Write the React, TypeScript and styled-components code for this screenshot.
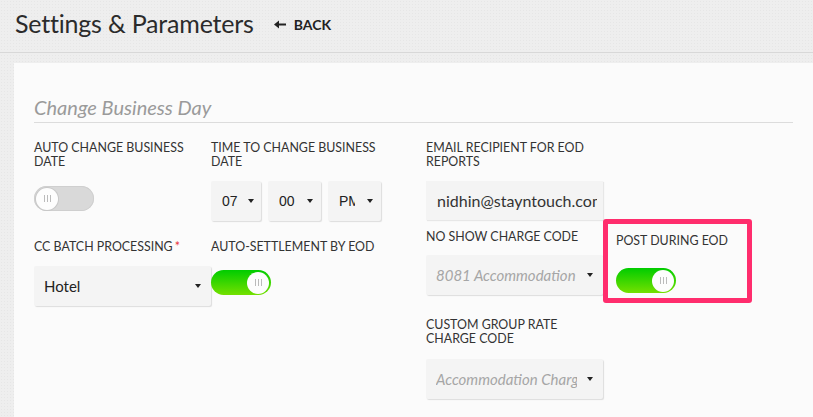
import { FC } from "react";
import styled, { createGlobalStyle, css } from "styled-components";

const GlobalStyle = createGlobalStyle`
  html, body {
    margin: 0;
    padding: 0;
  }
  body {
    font-family: "Lato", "Open Sans", sans-serif;
    background-color: #eeeeee;
    background-image: radial-gradient(rgba(0, 0, 0, 0.035) 1px, transparent 1px);
    background-size: 3px 3px;
    color: #333;
  }
`;

interface ToggleProps {
  on?: boolean;
}

const Toggle: FC<ToggleProps> = ({ on }) => (
  <Track $on={on}>
    <Knob $on={on}>
      <Grip />
    </Knob>
  </Track>
);

interface SelectProps {
  value: string;
  disabled?: boolean;
  width: number;
}

const Select: FC<SelectProps> = ({ value, disabled, width }) => (
  <SelectBox style={{ width }}>
    <SelectValue $disabled={disabled}>{value}</SelectValue>
    <Caret />
  </SelectBox>
);

const TimeSelect: FC<{ value: string; width: number }> = ({ value, width }) => (
  <TimeBox style={{ width }}>
    <TimeValue>{value}</TimeValue>
    <Caret />
  </TimeBox>
);

export default function App() {
  return (
    <>
      <GlobalStyle />
      <Page>
        <Header>
          <Title>Settings &amp; Parameters</Title>
          <Back>
            <BackArrow>
              <svg width="12" height="9" viewBox="0 0 12 9">
                <path d="M0 4.5 L5 0.5 V3.4 H12 V5.6 H5 V8.5 Z" fill="#222" />
              </svg>
            </BackArrow>
            BACK
          </Back>
        </Header>
        <Content>
          <Panel>
            <SectionTitle>Change Business Day</SectionTitle>
            <Form>
              <LeftGrid>
                <Field>
                  <Label>
                    Auto change business
                    <br />
                    date
                  </Label>
                  <ToggleWrap>
                    <Toggle />
                  </ToggleWrap>
                </Field>
                <Field>
                  <Label>
                    Time to change business
                    <br />
                    date
                  </Label>
                  <TimeRow>
                    <TimeSelect value="07" width={50} />
                    <TimeSelect value="00" width={53} />
                    <TimeSelect value="PM" width={53} />
                  </TimeRow>
                </Field>
                <Field>
                  <Label>
                    CC Batch processing<Required>*</Required>
                  </Label>
                  <Select value="Hotel" width={177} />
                </Field>
                <Field>
                  <Label>Auto-settlement by EOD</Label>
                  <ToggleWrap $top={4}>
                    <Toggle on />
                  </ToggleWrap>
                </Field>
              </LeftGrid>
              <RightGrid>
                <Field>
                  <Label>
                    Email recipient for EOD
                    <br />
                    reports
                  </Label>
                  <Input>
                    <InputText>nidhin@stayntouch.com</InputText>
                  </Input>
                </Field>
                <Spacer />
                <Field $top={10} $gap={11}>
                  <Label>No show charge code</Label>
                  <Select value="8081 Accommodation" width={177} disabled />
                </Field>
                <Highlight>
                  <Label>Post during EOD</Label>
                  <ToggleWrap $top={4}>
                    <Toggle on />
                  </ToggleWrap>
                </Highlight>
                <Field $top={15} $gap={13}>
                  <Label>
                    Custom group rate
                    <br />
                    charge code
                  </Label>
                  <Select value="Accommodation Charge" width={177} disabled />
                </Field>
              </RightGrid>
            </Form>
          </Panel>
        </Content>
      </Page>
    </>
  );
}

const Page = styled.div`
  display: flex;
  flex-direction: column;
  height: 417px;
  overflow: hidden;
`;

const Header = styled.div`
  height: 53px;
  box-sizing: border-box;
  display: flex;
  align-items: center;
  gap: 20px;
  padding: 0 15px 6px;
  border-bottom: 1px solid #d8d8d8;
`;

const Title = styled.h1`
  margin: 0;
  font-size: 25px;
  font-weight: 400;
  color: #2b2b2b;
  letter-spacing: -0.2px;
`;

const Back = styled.a`
  display: flex;
  align-items: center;
  gap: 8px;
  font-size: 14px;
  font-weight: 700;
  color: #222;
  padding-top: 2px;
`;

const BackArrow = styled.span`
  display: flex;
`;

const Content = styled.div`
  flex: 1;
  display: flex;
  padding: 10px 0 0 14px;
`;

const Panel = styled.div`
  flex: 1;
  background: #fbfbfb;
  padding: 32px 20px 0 20px;
`;

const SectionTitle = styled.h2`
  margin: 0;
  font-size: 20px;
  line-height: 24px;
  font-weight: 400;
  font-style: italic;
  color: #9a9a9a;
  padding-bottom: 3px;
  border-bottom: 1px solid #dcdcdc;
`;

const Form = styled.div`
  display: flex;
  margin-top: 18px;
`;

const LeftGrid = styled.div`
  display: grid;
  grid-template-columns: 177px 215px;
  grid-auto-rows: min-content;
  row-gap: 19px;
`;

const RightGrid = styled.div`
  display: grid;
  grid-template-columns: 177px 149px;
  grid-auto-rows: min-content;
`;

const Spacer = styled.div``;

const Field = styled.div<{ $top?: number; $gap?: number }>`
  display: flex;
  flex-direction: column;
  align-items: flex-start;
  gap: ${(p) => p.$gap ?? 12}px;
  margin-top: ${(p) => p.$top ?? 0}px;
`;

const Label = styled.div`
  font-size: 12.4px;
  line-height: 14px;
  text-transform: uppercase;
  color: #333;
  white-space: nowrap;
`;

const Required = styled.span`
  color: #e8363c;
  margin-left: 2px;
`;

const ToggleWrap = styled.div<{ $top?: number }>`
  margin-top: ${(p) => p.$top ?? 5}px;
`;

const Track = styled.div<{ $on?: boolean }>`
  width: 60px;
  height: 25px;
  box-sizing: border-box;
  border-radius: 13px;
  display: flex;
  align-items: center;
  padding: 0 2px;
  justify-content: ${(p) => (p.$on ? "flex-end" : "flex-start")};
  ${(p) =>
    p.$on
      ? css`
          background: linear-gradient(#00cc00, #74e000);
        `
      : css`
          background: #d9d9d9;
          box-shadow: inset 0 0 0 1px #cfcfcf;
        `}
`;

const Knob = styled.div<{ $on?: boolean }>`
  width: 22px;
  height: 22px;
  border-radius: 50%;
  background: #fdfdfd;
  display: flex;
  align-items: center;
  justify-content: center;
  box-shadow: ${(p) => (p.$on ? "none" : "0 0 0 1px #c8c8c8")};
`;

const Grip = styled.div`
  width: 5px;
  height: 7px;
  border-left: 1px solid #bbb;
  border-right: 1px solid #bbb;
  position: relative;
  &::after {
    content: "";
    position: absolute;
    left: 2px;
    top: 0;
    width: 1px;
    height: 7px;
    background: #bbb;
  }
`;

const TimeRow = styled.div`
  display: flex;
  gap: 7px;
`;

const SelectBox = styled.div`
  height: 40px;
  box-sizing: border-box;
  background: #f4f4f4;
  box-shadow: 1px 1px 1px rgba(0, 0, 0, 0.12);
  border-radius: 2px;
  display: flex;
  align-items: center;
  padding: 0 10px 0 10px;
  gap: 10px;
`;

const TimeBox = styled(SelectBox)`
  padding: 0 8px 0 11px;
  gap: 10px;
  justify-content: space-between;
`;

const SelectValue = styled.span<{ $disabled?: boolean }>`
  flex: 1;
  min-width: 0;
  overflow: hidden;
  white-space: nowrap;
  font-size: 15px;
  color: ${(p) => (p.$disabled ? "#a6a6a6" : "#222")};
  font-style: ${(p) => (p.$disabled ? "italic" : "normal")};
`;

const TimeValue = styled.span`
  width: 16px;
  flex: none;
  overflow: hidden;
  white-space: nowrap;
  font-size: 14px;
  color: #222;
  font-family: "Liberation Sans", Arial, sans-serif;
`;

const Caret = styled.span`
  width: 0;
  height: 0;
  border-left: 3.5px solid transparent;
  border-right: 3.5px solid transparent;
  border-top: 4px solid #222;
  flex: none;
`;

const Input = styled.div`
  width: 177px;
  height: 39px;
  box-sizing: border-box;
  background: #f4f4f4;
  box-shadow: 1px 1px 1px rgba(0, 0, 0, 0.08);
  display: flex;
  align-items: center;
  padding: 0 6px 0 11px;
`;

const InputText = styled.span`
  flex: 1;
  min-width: 0;
  overflow: hidden;
  white-space: nowrap;
  font-size: 16px;
  color: #333;
`;

const Highlight = styled.div`
  margin-top: -1px;
  box-sizing: border-box;
  width: 149px;
  height: 84px;
  border: 5px solid #ff2d6d;
  border-radius: 3px;
  padding: 10px 8px 0 8px;
  display: flex;
  flex-direction: column;
  gap: 16px;
`;
